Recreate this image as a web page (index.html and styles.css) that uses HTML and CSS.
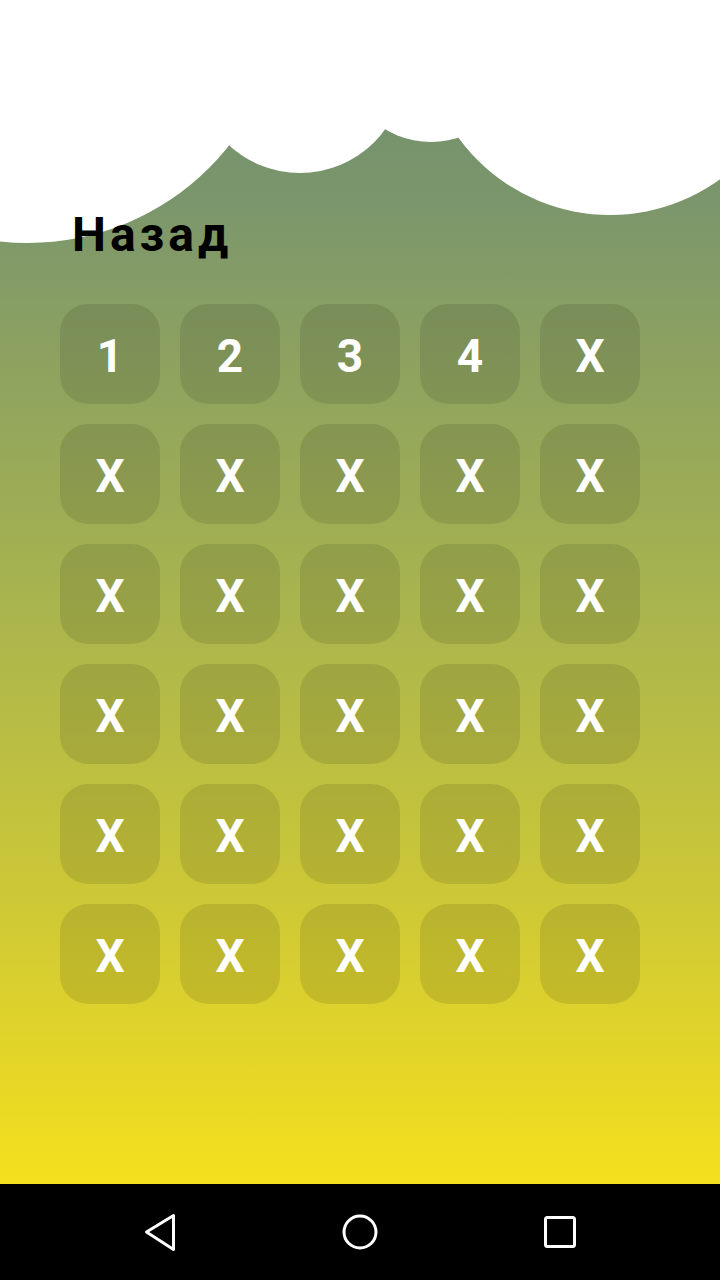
FILE: index.html
```html
<!DOCTYPE html>
<html lang="ru">
<head>
<meta charset="utf-8">
<title>Уровни</title>
<link rel="stylesheet" href="styles.css">
</head>
<body>
<div class="app">
  <main class="screen">
    <svg class="cloud" width="720" height="260" viewBox="0 0 720 260" aria-hidden="true">
      <rect x="0" y="0" width="720" height="40" fill="#fff"/>
      <circle cx="28" cy="-13" r="256" fill="#fff"/>
      <circle cx="300" cy="68" r="105" fill="#fff"/>
      <circle cx="431" cy="53" r="89" fill="#fff"/>
      <circle cx="610" cy="28" r="187" fill="#fff"/>
    </svg>
    <div class="title">Назад</div>
    <div class="grid">
      <div class="tile">1</div>
      <div class="tile">2</div>
      <div class="tile">3</div>
      <div class="tile">4</div>
      <div class="tile">X</div>
      <div class="tile">X</div>
      <div class="tile">X</div>
      <div class="tile">X</div>
      <div class="tile">X</div>
      <div class="tile">X</div>
      <div class="tile">X</div>
      <div class="tile">X</div>
      <div class="tile">X</div>
      <div class="tile">X</div>
      <div class="tile">X</div>
      <div class="tile">X</div>
      <div class="tile">X</div>
      <div class="tile">X</div>
      <div class="tile">X</div>
      <div class="tile">X</div>
      <div class="tile">X</div>
      <div class="tile">X</div>
      <div class="tile">X</div>
      <div class="tile">X</div>
      <div class="tile">X</div>
      <div class="tile">X</div>
      <div class="tile">X</div>
      <div class="tile">X</div>
      <div class="tile">X</div>
      <div class="tile">X</div>
    </div>
  </main>
  <nav class="navbar">
    <div class="nav-btn">
      <svg width="40" height="40" viewBox="0 0 40 40"><path d="M33.5 3.5 L6.5 20 L33.5 37.5 Z" fill="none" stroke="#fff" stroke-width="3" stroke-linejoin="round"/></svg>
    </div>
    <div class="nav-btn">
      <svg width="40" height="40" viewBox="0 0 40 40"><circle cx="20" cy="20" r="16" fill="none" stroke="#fff" stroke-width="3"/></svg>
    </div>
    <div class="nav-btn">
      <svg width="40" height="40" viewBox="0 0 40 40"><rect x="5.5" y="5.5" width="29" height="29" rx="2" fill="none" stroke="#fff" stroke-width="3"/></svg>
    </div>
  </nav>
</div>
</body>
</html>
```

FILE: styles.css
```css
html, body {
  margin: 0;
  padding: 0;
}
body {
  width: 720px;
  height: 1280px;
  overflow: hidden;
  font-family: Roboto, "Noto Sans", "Liberation Sans", sans-serif;
}
.app {
  display: flex;
  flex-direction: column;
  height: 1280px;
}
.screen {
  position: relative;
  flex: 1;
  overflow: hidden;
  background: linear-gradient(to bottom,
    #6f8e6f 0px,
    #7b966c 200px,
    #a8b44e 600px,
    #cdc836 900px,
    #f5e01d 1184px);
}
.cloud {
  position: absolute;
  left: 0;
  top: 0;
  display: block;
}
.title {
  position: relative;
  height: 48px;
  padding: 211px 0 0 72px;
  font-size: 48px;
  line-height: 48px;
  font-weight: 700;
  letter-spacing: 4px;
  color: #000;
}
.grid {
  display: grid;
  grid-template-columns: repeat(5, 100px);
  grid-auto-rows: 100px;
  gap: 20px;
  margin: 45px 0 0 60px;
}
.tile {
  display: flex;
  align-items: center;
  justify-content: center;
  padding-top: 3px;
  box-sizing: border-box;
  border-radius: 28px;
  background: rgba(0, 0, 0, 0.1);
  color: #fff;
  font-size: 46px;
  font-weight: 700;
}
.navbar {
  height: 96px;
  background: #000;
  display: grid;
  grid-template-columns: repeat(3, 200px);
  justify-content: center;
  align-items: center;
}
.nav-btn {
  display: flex;
  justify-content: center;
  align-items: center;
}
.nav-btn svg {
  display: block;
}
```
